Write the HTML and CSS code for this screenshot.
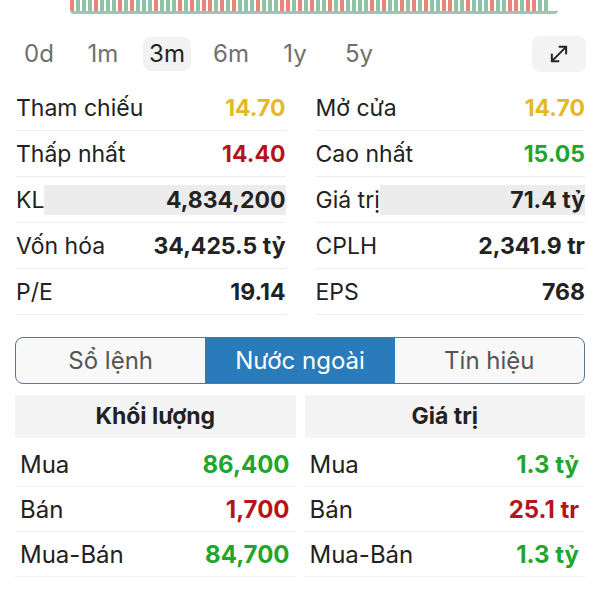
FILE: index.html
```html
<!DOCTYPE html>
<html>
<head>
    <title>Stock detail</title>
    <link rel="stylesheet" href="styles.css">
</head>
<body>
    <!-- Volume strip of the chart above (cut off by the top of the view) -->
    <div class="strip" id="strip"></div>

    <div class="periods">
        <span class="period">0d</span>
        <span class="period">1m</span>
        <span class="period active">3m</span>
        <span class="period">6m</span>
        <span class="period">1y</span>
        <span class="period">5y</span>
        <button class="expand">
            <svg width="22" height="22" viewBox="0 0 20 20" fill="none" stroke="#222" stroke-width="1.8" stroke-linecap="round" stroke-linejoin="round">
                <path d="M3.5 16.5 L16.5 3.5" />
                <path d="M10.5 3.5 L16.5 3.5 L16.5 9.5" />
                <path d="M3.5 10.5 L3.5 16.5 L9.5 16.5" />
            </svg>
        </button>
    </div>

    <div class="stats">
        <div class="col">
            <div class="row"><span class="lbl">Tham chiếu</span><span class="val ref">14.70</span></div>
            <div class="row"><span class="lbl">Thấp nhất</span><span class="val down">14.40</span></div>
            <div class="row"><span class="lbl">KL</span><span class="val fill">4,834,200</span></div>
            <div class="row"><span class="lbl">Vốn hóa</span><span class="val">34,425.5 tỷ</span></div>
            <div class="row"><span class="lbl">P/E</span><span class="val">19.14</span></div>
        </div>
        <div class="col">
            <div class="row"><span class="lbl">Mở cửa</span><span class="val ref">14.70</span></div>
            <div class="row"><span class="lbl">Cao nhất</span><span class="val up">15.05</span></div>
            <div class="row"><span class="lbl">Giá trị</span><span class="val fill">71.4 tỷ</span></div>
            <div class="row"><span class="lbl">CPLH</span><span class="val">2,341.9 tr</span></div>
            <div class="row"><span class="lbl">EPS</span><span class="val">768</span></div>
        </div>
    </div>

    <div class="tabs">
        <div class="tab">Sổ lệnh</div>
        <div class="tab active">Nước ngoài</div>
        <div class="tab">Tín hiệu</div>
    </div>

    <div class="foreign">
        <div class="fcol">
            <div class="head">Khối lượng</div>
            <div class="frow"><span>Mua</span><span class="val up">86,400</span></div>
            <div class="frow"><span>Bán</span><span class="val down">1,700</span></div>
            <div class="frow"><span>Mua-Bán</span><span class="val up">84,700</span></div>
        </div>
        <div class="fcol">
            <div class="head">Giá trị</div>
            <div class="frow"><span>Mua</span><span class="val up">1.3 tỷ</span></div>
            <div class="frow"><span>Bán</span><span class="val down">25.1 tr</span></div>
            <div class="frow"><span>Mua-Bán</span><span class="val up">1.3 tỷ</span></div>
        </div>
    </div>

    <script>
        // r = red (down day), g = green (up day)
        const days = 'rgggrgggrgrgggrgggrgrgrrgrgrgggrgggrrgrgrggrgrggggrgrggrgrgrggrrggrgggrggrrgrrgg';
        const strip = document.getElementById('strip');
        days.split('').forEach(d => {
            const bar = document.createElement('span');
            bar.className = 'bar ' + (d === 'r' ? 'red' : 'green');
            strip.appendChild(bar);
        });
    </script>
</body>
</html>
```

FILE: styles.css
```css
body {
    margin: 0;
    background: #fff;
    color: #222;
    font-family: Inter, "Noto Sans", sans-serif;
    font-size: 23px;
}
.strip {
    display: flex;
    gap: 2px;
    margin-left: 70px;
    width: 488px;
    height: 14px;
    overflow: hidden;
    border-bottom: 3px solid #a3c2b3;
    border-radius: 0 0 4px 4px;
    margin-top: -3px;
}
.bar {
    flex: none;
    width: 4px;
    height: 100%;
}
.bar.red {
    background: #e8857b;
}
.bar.green {
    background: #8fc3a7;
}
.periods {
    display: flex;
    align-items: center;
    gap: 16px;
    padding: 0 14px 0 15px;
    margin-top: 22px;
    height: 36px;
    font-size: 24px;
}
.period {
    width: 48px;
    height: 34px;
    line-height: 34px;
    text-align: center;
    color: #707070;
    border-radius: 8px;
}
.period.active {
    background: #f2f2f2;
    color: #222;
}
.expand {
    margin-left: auto;
    width: 54px;
    height: 36px;
    border: none;
    border-radius: 8px;
    background: #f3f3f3;
    display: flex;
    align-items: center;
    justify-content: center;
}
.stats {
    display: flex;
    gap: 30px;
    padding: 0 15px 0 16px;
    margin-top: 13px;
}
.col {
    flex: 1;
}
.row {
    display: flex;
    align-items: center;
    justify-content: space-between;
    height: 45px;
    border-bottom: 1px solid #ededed;
}
.val {
    font-weight: 700;
    text-align: right;
}
.val.fill {
    flex: 1;
    height: 30px;
    line-height: 30px;
    background: #ececec;
}
.ref {
    color: #e5b923;
}
.down {
    color: #b4141c;
}
.up {
    color: #22a52c;
}
.tabs {
    display: flex;
    margin: 22px 15px 0;
    height: 45px;
    border: 1px solid #5b7690;
    border-radius: 8px;
    overflow: hidden;
    background: #f8f8f8;
    font-size: 24px;
}
.tab {
    flex: 1;
    display: flex;
    align-items: center;
    justify-content: center;
    color: #555;
}
.tab.active {
    background: #2a7bb9;
    color: #fff;
}
.foreign {
    display: flex;
    gap: 9px;
    margin: 11px 15px 0;
    font-size: 24px;
}
.fcol {
    flex: 1;
}
.head {
    height: 43px;
    line-height: 43px;
    margin-bottom: 4px;
    text-align: center;
    font-weight: 700;
    font-size: 23px;
    background: #f4f4f4;
}
.frow {
    display: flex;
    justify-content: space-between;
    align-items: center;
    height: 44px;
    padding: 0 6px 0 5px;
    border-bottom: 1px solid #efefef;
}
```
